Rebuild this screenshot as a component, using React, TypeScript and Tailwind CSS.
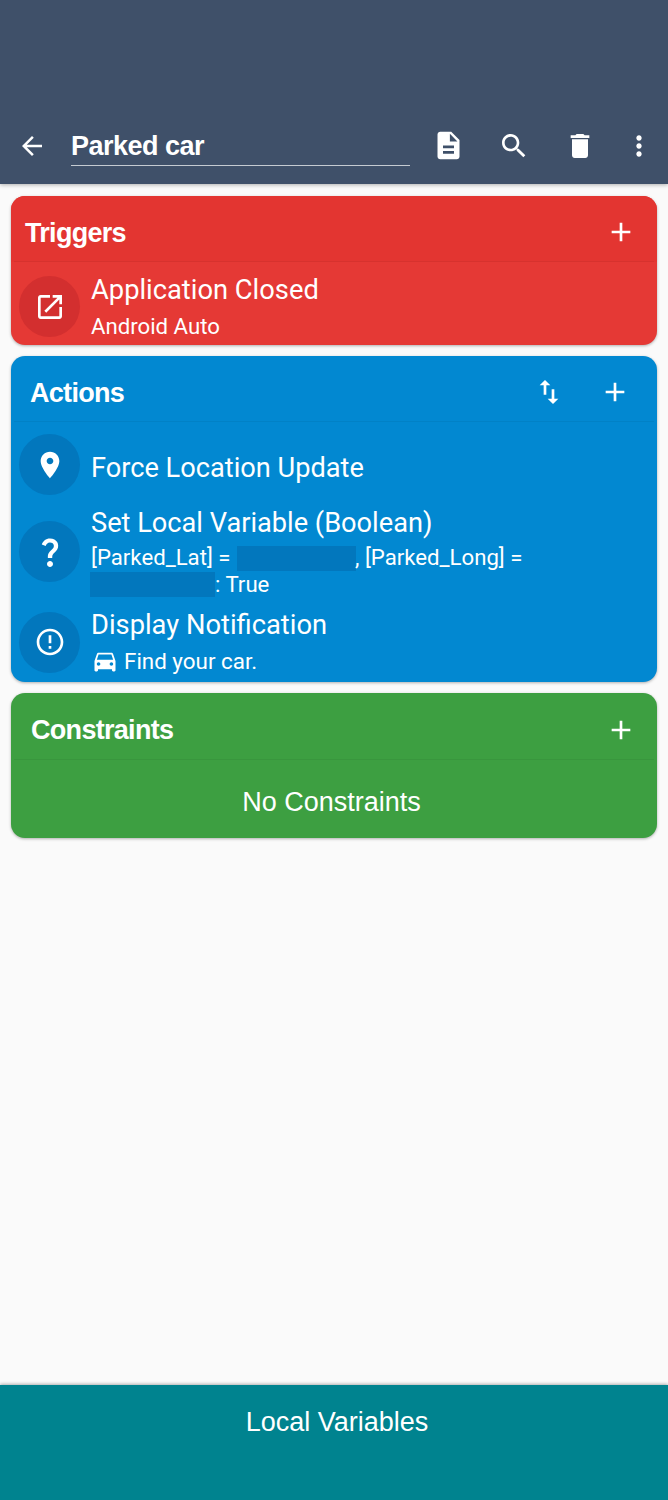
import type { ReactNode } from "react";

const roboto = "font-['Roboto',sans-serif]";
const helv = "font-['Liberation_Sans',sans-serif]";

// Material icon paths, all on a 24 box
const ICONS = {
  back: "M20 11H7.83l5.59-5.59L12 4l-8 8 8 8 1.41-1.41L7.83 13H20v-2z",
  doc: "M14 2H6c-1.1 0-1.99.9-1.99 2L4 20c0 1.1.89 2 1.99 2H18c1.1 0 2-.9 2-2V8l-6-6zm2 16H8v-2h8v2zm0-4H8v-2h8v2zm-3-5V3.5L18.5 9H13z",
  search: "M15.5 14h-.79l-.28-.27C15.41 12.59 16 11.11 16 9.5 16 5.91 13.09 3 9.5 3S3 5.91 3 9.5 5.91 16 9.5 16c1.61 0 3.09-.59 4.23-1.57l.27.28v.79l5 4.99L20.49 19l-4.99-5zm-6 0C7.01 14 5 11.99 5 9.5S7.01 5 9.5 5 14 7.01 14 9.5 11.99 14 9.5 14z",
  trash: "M6 19c0 1.1.9 2 2 2h8c1.1 0 2-.9 2-2V7H6v12zM19 4h-3.5l-1-1h-5l-1 1H5v2h14V4z",
  more: "M12 8c1.1 0 2-.9 2-2s-.9-2-2-2-2 .9-2 2 .9 2 2 2zm0 2c-1.1 0-2 .9-2 2s.9 2 2 2 2-.9 2-2-.9-2-2-2zm0 6c-1.1 0-2 .9-2 2s.9 2 2 2 2-.9 2-2-.9-2-2-2z",
  add: "M19 13h-6v6h-2v-6H5v-2h6V5h2v6h6v2z",
  open: "M19 19H5V5h7V3H5c-1.11 0-2 .9-2 2v14c0 1.1.89 2 2 2h14c1.1 0 2-.9 2-2v-7h-2v7zM14 3v2h3.59l-9.83 9.83 1.41 1.41L19 6.41V10h2V3h-7z",
  place: "M12 2C8.13 2 5 5.13 5 9c0 5.25 7 13 7 13s7-7.75 7-13c0-3.87-3.13-7-7-7zm0 9.5c-1.38 0-2.5-1.12-2.5-2.5s1.12-2.5 2.5-2.5 2.5 1.12 2.5 2.5-1.12 2.5-2.5 2.5z",
  question: "M11.07 12.85c.77-1.39 2.25-2.21 3.11-3.44.91-1.29.4-3.7-2.18-3.7-1.69 0-2.52 1.28-2.87 2.34L6.54 6.96C7.25 4.83 9.18 3 11.99 3c2.35 0 3.96 1.07 4.78 2.41.7 1.15 1.11 3.3.03 4.9-1.2 1.77-2.35 2.31-2.97 3.45-.25.46-.35.76-.35 2.24h-2.89c-.01-.78-.13-2.05.48-3.15zM14 20c0 1.1-.9 2-2 2s-2-.9-2-2 .9-2 2-2 2 .9 2 2z",
  alert: "M11 15h2v2h-2zm0-8h2v6h-2zm.99-5C6.47 2 2 6.48 2 12s4.47 10 9.99 10C17.52 22 22 17.52 22 12S17.52 2 11.99 2zM12 20c-4.42 0-8-3.58-8-8s3.58-8 8-8 8 3.58 8 8-3.58 8-8 8z",
  car: "M18.92 6.01C18.72 5.42 18.16 5 17.5 5h-11c-.66 0-1.21.42-1.42 1.01L3 12v8c0 .55.45 1 1 1h1c.55 0 1-.45 1-1v-1h12v1c0 .55.45 1 1 1h1c.55 0 1-.45 1-1v-8l-2.08-5.99zM6.5 16c-.83 0-1.5-.67-1.5-1.5S5.67 13 6.5 13s1.5.67 1.5 1.5S7.33 16 6.5 16zm11 0c-.83 0-1.5-.67-1.5-1.5s.67-1.5 1.5-1.5 1.5.67 1.5 1.5-.67 1.5-1.5 1.5zM5 11l1.5-4.5h11L19 11H5z",
  swap: "M16 17.01V10h-2v7.01h-3L15 21l4-3.99h-3zM9 3L5 6.99h3V14h2V6.99h3L9 3z",
};

function Icon({ d, className }: { d: string; className: string }) {
  return (
    <svg viewBox="0 0 24 24" fill="currentColor" className={className} aria-hidden>
      <path d={d} />
    </svg>
  );
}

function Badge({ d, bg, size = "w-8 h-8", extra = "" }: { d: string; bg: string; size?: string; extra?: string }) {
  return (
    <div className={`${bg} ${extra} w-[61px] h-[61px] rounded-full shrink-0 flex items-center justify-center`}>
      <Icon d={d} className={size} />
    </div>
  );
}

function CardHead({ title, pad, children }: { title: string; pad: string; children: ReactNode }) {
  return (
    <div className={`h-[66px] pt-[7px] flex items-center mx-[3px] border-b border-black/5 ${pad}`}>
      <span className={`${helv} flex-1 text-[27px] font-bold tracking-[-0.7px] pt-[2px]`}>{title}</span>
      {children}
    </div>
  );
}

export default function App() {
  return (
    <div className="w-[668px] h-[1500px] flex flex-col bg-[#fafafa] text-white overflow-hidden">
      {/* app bar */}
      <header className="h-[184px] bg-[#3f5069] shadow-[0_1px_4px_rgba(0,0,0,0.3)] flex items-end pb-[18px] shrink-0 z-10">
        <Icon d={ICONS.back} className="w-[30px] h-[30px] ml-[17px] mb-[1px] -translate-y-[4px]" />
        <div className={`${helv} ml-[24px] w-[339px] h-[47px] border-b border-white/70 text-[27px] font-bold tracking-[-0.5px] leading-[34px] pt-[10px]`}>
          Parked car
        </div>
        <div className="flex items-center ml-[22px] h-[47px] translate-y-[3px]">
          <Icon d={ICONS.doc} className="w-[33px] h-[33px]" />
          <Icon d={ICONS.search} className="w-[32px] h-[32px] ml-[33px]" />
          <Icon d={ICONS.trash} className="w-[32px] h-[32px] ml-[34px]" />
          <Icon d={ICONS.more} className="w-[32px] h-[32px] ml-[27px]" />
        </div>
      </header>

      <main className={`${roboto} flex-1 px-[11px] pt-[12px] flex flex-col gap-[11px]`}>
        {/* triggers */}
        <section className="h-[149px] rounded-[14px] bg-[#e53935] shadow-[0_1px_3px_rgba(0,0,0,0.3)]">
          <div className="rounded-t-[14px] bg-[#e33531]">
            <CardHead title="Triggers" pad="pl-[11px] pr-[17px]">
              <Icon d={ICONS.add} className="w-[32px] h-[32px]" />
            </CardHead>
          </div>
          <div className="flex items-start pl-[8px] pt-[14px]">
            <Badge d={ICONS.open} bg="bg-[#d32f2f]" />
            <div className="ml-[11px] -mt-[5px]">
              <div className="text-[27.3px] leading-[38px]">Application Closed</div>
              <div className="text-[22.2px] leading-[32px] mt-[1px]">Android Auto</div>
            </div>
          </div>
        </section>

        {/* actions */}
        <section className="h-[326px] rounded-[14px] bg-[#0288d1] shadow-[0_1px_3px_rgba(0,0,0,0.3)]">
          <CardHead title="Actions" pad="pl-[16px] pr-[23px]">
            <Icon d={ICONS.swap} className="w-[32px] h-[32px] mr-[34px]" />
            <Icon d={ICONS.add} className="w-[32px] h-[32px]" />
          </CardHead>
          <div className="flex items-center pl-[8px] h-[83px]">
            <Badge d={ICONS.place} bg="bg-[#0277bd]" extra="mt-[2px]" />
            <div className="ml-[11px] text-[27.2px] leading-[38px] mt-[8px]">Force Location Update</div>
          </div>
          <div className="flex items-center pl-[8px] h-[93px]">
            <Badge d={ICONS.question} bg="bg-[#0277bd]" size="w-[36px] h-[36px]" />
            <div className="ml-[11px]">
              <div className="text-[27.2px] leading-[36px]">Set Local Variable (Boolean)</div>
              <div className="text-[22.2px] leading-[27px] mt-[3px]">
                [Parked_Lat] = <span className="inline-block align-middle w-[119px] h-[25px] ml-[1px] -mr-[1px] bg-[#0277bd]" />, [Parked_Long] =
              </div>
              <div className="text-[22.2px] leading-[27px] -ml-[1px] flex items-center">
                <span className="w-[125px] h-[25px] bg-[#0277bd]" />: True
              </div>
            </div>
          </div>
          <div className="flex items-center pl-[8px] mt-[8px] h-[72px]">
            <Badge d={ICONS.alert} bg="bg-[#0277bd]" />
            <div className="ml-[11px]">
              <div className="text-[27.3px] leading-[36px]">Display Notification</div>
              <div className="text-[22.4px] leading-[32px] flex items-center mt-[2px]">
                <Icon d={ICONS.car} className="w-[28px] h-[28px] mr-[5px]" />
                Find your car.
              </div>
            </div>
          </div>
        </section>

        {/* constraints */}
        <section className="h-[145px] rounded-[14px] bg-[#3d9f41] shadow-[0_1px_3px_rgba(0,0,0,0.3)]">
          <CardHead title="Constraints" pad="pl-[17px] pr-[17px] h-[67px]">
            <Icon d={ICONS.add} className="w-[32px] h-[32px]" />
          </CardHead>
          <div className={`${helv} h-[78px] pt-[6px] flex items-center justify-center text-[27px] -ml-[5px]`}>No Constraints</div>
        </section>
      </main>

      {/* bottom button */}
      <footer className={`${helv} h-[115px] shrink-0 bg-[#00838f] shadow-[0_-1px_3px_rgba(0,0,0,0.3)] pt-[20px] text-center text-[27px] leading-[34px] pl-[6px]`}>
        Local Variables
      </footer>
    </div>
  );
}
